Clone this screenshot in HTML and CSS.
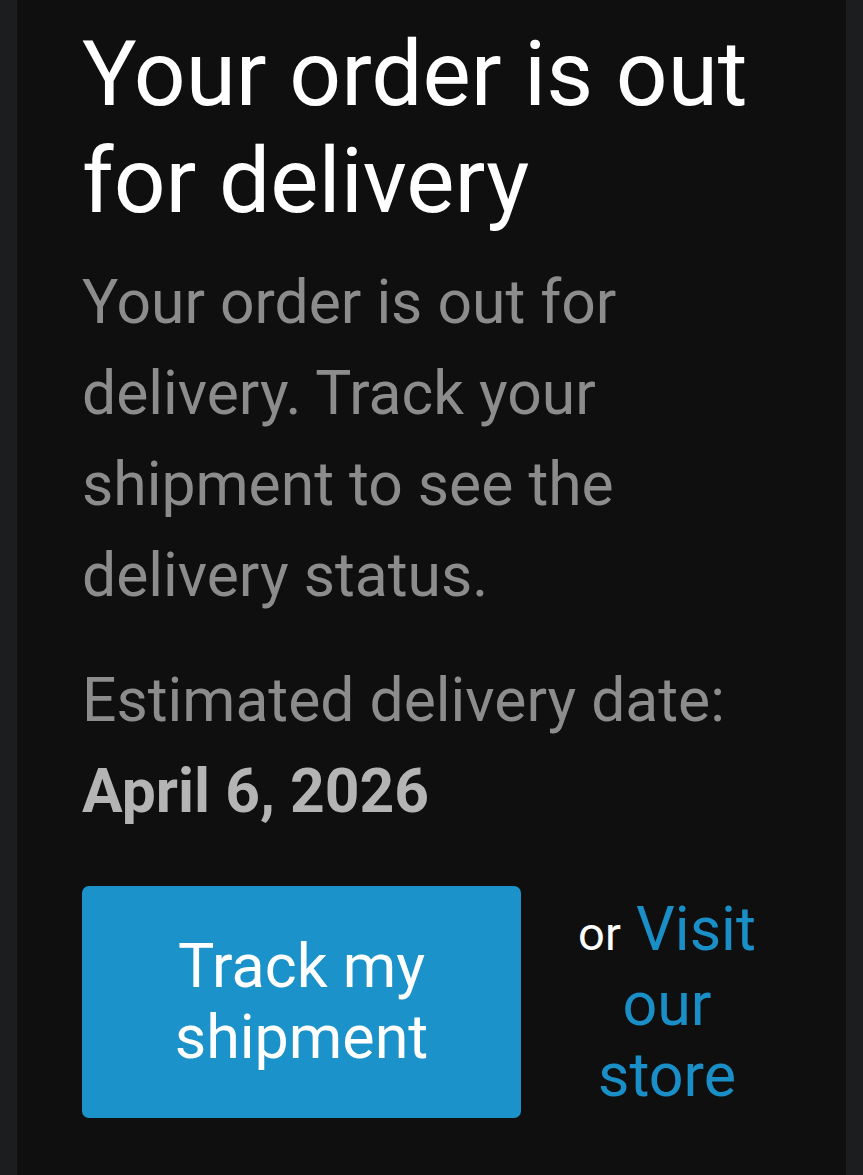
FILE: index.html
```html
<!DOCTYPE html>
<html lang="en">

<head>
    <meta charset="UTF-8" />
    <meta name="viewport" content="width=device-width, initial-scale=1.0" />
    <title>Your order is out for delivery</title>
    <link rel="stylesheet" href="styles.css">
</head>

<body>
    <main class="card">
        <h1>Your order is out for delivery</h1>
        <p class="lead">Your order is out for delivery. Track your shipment to see the delivery status.</p>
        <p class="eta">
            Estimated delivery date:<br>
            <strong>April 6, 2026</strong>
        </p>
        <div class="actions">
            <a class="button" href="#">Track my shipment</a>
            <p class="alt">
                <span class="or">or</span> <a href="#">Visit our store</a>
            </p>
        </div>
    </main>
</body>

</html>
```

FILE: styles.css
```css
* {
    margin: 0;
    padding: 0;
    box-sizing: border-box;
}

body {
    font-family: Roboto, 'Liberation Sans', sans-serif;
    background-color: #1c1d1f;
    color: #ffffff;
    padding: 0 17px;
}

.card {
    background-color: #0f0f0f;
    min-height: 100vh;
    padding: 21px 65px 40px;
}

h1 {
    font-size: 91px;
    font-weight: 400;
    line-height: 107px;
    color: #ffffff;
}

.lead,
.eta {
    font-size: 60.6px;
    line-height: 91px;
    color: #8c8c8c;
}

.lead {
    margin-top: 22px;
}

.eta {
    margin-top: 34px;
}

.eta strong {
    color: #b4b4b4;
    font-weight: 700;
}

.actions {
    display: flex;
    align-items: center;
    margin-top: 49px;
}

.button {
    flex: 0 0 439px;
    display: block;
    padding: 45px 20px;
    background-color: #1b92c9;
    border-radius: 7px;
    color: #ffffff;
    text-decoration: none;
    text-align: center;
    font-size: 61px;
    line-height: 71px;
}

.alt {
    flex: 1;
    padding-left: 32px;
    text-align: center;
    font-size: 61px;
    line-height: 71px;
}

.alt .or {
    font-size: 47px;
    color: #ffffff;
}

.alt a {
    color: #1a8fc7;
    text-decoration: none;
}
```
